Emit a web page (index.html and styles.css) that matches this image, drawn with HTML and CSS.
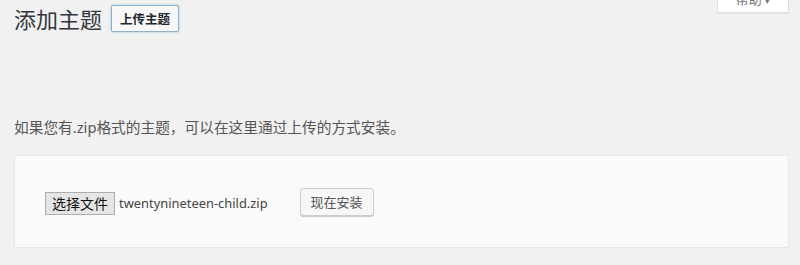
FILE: index.html
```html
<!DOCTYPE html>
<html lang="zh-CN">
<head>
<meta charset="utf-8">
<title>添加主题</title>
<link rel="stylesheet" href="styles.css">
</head>
<body>
<div class="wrap">
  <div class="help-tab">帮助 <span class="caret">▾</span></div>
  <div class="header">
    <h1 class="title">添加主题</h1>
    <button class="page-action" type="button">上传主题</button>
  </div>
  <p class="desc">如果您有.zip格式的主题，可以在这里通过上传的方式安装。</p>
  <div class="upload-box">
    <span class="file-btn">选择文件</span>
    <span class="file-name">twentynineteen-child.zip</span>
    <button class="install" type="button">现在安装</button>
  </div>
</div>
</body>
</html>
```
FILE: styles.css
```css
html, body {
  margin: 0;
  padding: 0;
  background: #f1f1f1;
  height: 100%;
}
body {
  font-family: "Noto Sans", "Noto Sans CJK SC", sans-serif;
  color: #444;
  overflow: hidden;
}
.wrap {
  position: relative;
  padding: 0 11px 0 14px;
}
.help-tab {
  position: absolute;
  top: -14px;
  right: 11px;
  width: 72px;
  height: 27px;
  box-sizing: border-box;
  background: #fff;
  border: 1px solid #ddd;
  box-shadow: 0 1px 1px rgba(0,0,0,0.04);
  font-size: 13px;
  line-height: 24px;
  color: #72777c;
  text-align: center;
}
.caret {
  font-size: 9px;
}
.header {
  display: flex;
  align-items: center;
  gap: 9px;
  padding-top: 4px;
  height: 28px;
}
.title {
  margin: 0;
  font-family: "Noto Sans CJK SC", sans-serif;
  font-weight: 400;
  font-size: 22px;
  line-height: 28px;
  color: #32373c;
}
.page-action {
  height: 27px;
  box-sizing: border-box;
  padding: 0 8px;
  background: #f7f7f7;
  border: 1px solid #8fb0cb;
  border-radius: 2px;
  box-shadow: 0 0 2px rgba(30,140,190,0.5);
  font-family: "Noto Sans CJK SC", sans-serif;
  font-weight: 700;
  font-size: 12.5px;
  color: #23282d;
  line-height: 25px;
}
.desc {
  margin: 85px 0 18px;
  font-family: "Noto Sans", "Noto Sans CJK SC", sans-serif;
  font-size: 14.7px;
  line-height: 20px;
  color: #555;
}
.upload-box {
  display: flex;
  align-items: center;
  height: 31px;
  padding: 30px 30px;
  background: #fafafa;
  border: 1px solid #e8e8e8;
}
.file-btn {
  display: inline-block;
  height: 23px;
  box-sizing: border-box;
  padding: 0 6px;
  margin-top: 3px;
  background: #e5e5e5;
  border: 1px solid #adadad;
  font-family: "Noto Sans CJK SC", sans-serif;
  font-size: 14px;
  line-height: 21px;
  color: #111;
}
.file-name {
  margin: 3px 0 0 4px;
  font-size: 12.9px;
  color: #444;
}
.install {
  margin-left: 32px;
  height: 28px;
  box-sizing: border-box;
  padding: 0 10px;
  background: #f7f7f7;
  border: 1px solid #ccc;
  border-radius: 3px;
  box-shadow: 0 1px 0 #ccc;
  font-family: "Noto Sans CJK SC", sans-serif;
  font-size: 13px;
  color: #555;
  line-height: 26px;
}
```
